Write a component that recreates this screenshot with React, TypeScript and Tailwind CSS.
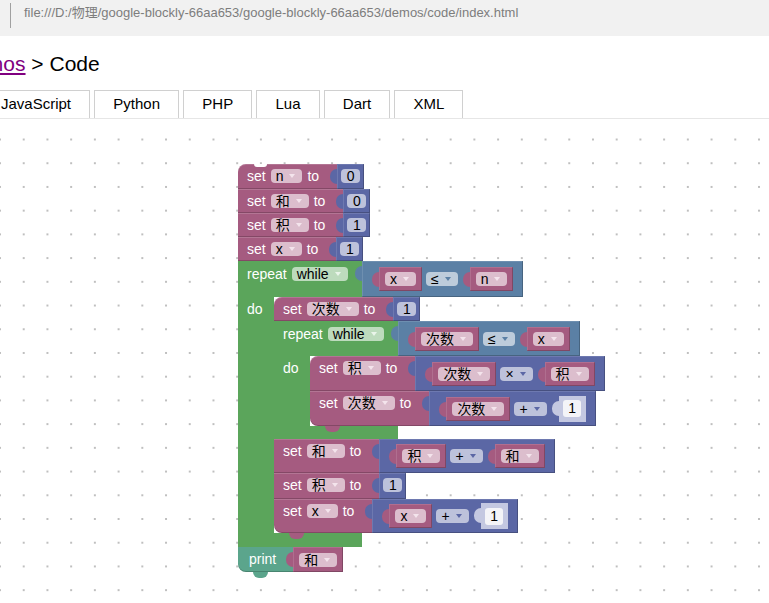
import type { ReactNode } from 'react';

const PINK = 'bg-[#a55b80]';
const EDGE = 'shadow-[inset_-1px_-1px_0_rgba(0,0,0,0.22),inset_1px_1px_0_rgba(255,255,255,0.12)]';

function Label({ children }: { children: ReactNode }) {
  return <span className="text-[14px] leading-none text-white">{children}</span>;
}

function Arrow({ tone }: { tone: string }) {
  return (
    <span
      className={`ml-[6px] inline-block h-0 w-0 border-x-[3px] border-t-[4px] border-x-transparent ${tone}`}
    />
  );
}

function Field({ text, bg, arrow }: { text: string; bg: string; arrow: string }) {
  return (
    <div
      className={`flex h-[14px] shrink-0 items-center rounded-[4px] pl-[5px] pr-[7px] text-[14px] leading-none text-black ${bg}`}
    >
      <span>{text}</span>
      <Arrow tone={arrow} />
    </div>
  );
}

// puzzle tab of an output block, drawn over the parent's colour
function Tab({ bg }: { bg: string }) {
  return (
    <div className="flex w-[8px] shrink-0 items-start justify-end pt-[5px]">
      <div className={`h-[15px] w-[7px] rounded-l-[7px] ${bg}`} />
    </div>
  );
}

function Bump({ bg }: { bg: string }) {
  return <div className={`absolute left-[15px] top-full z-10 h-[6px] w-[15px] rounded-b-[6px] ${bg}`} />;
}

function Num({ v }: { v: string }) {
  return (
    <div className="flex">
      <Tab bg="bg-[#5b67a5]" />
      <div className={`bg-[#5b67a5] px-[4px] pt-[5px] ${EDGE}`}>
        <div className="h-[14px] w-[19px] rounded-[4px] bg-[#bdc2db] text-center text-[14px] leading-[14px] text-black">
          {v}
        </div>
      </div>
    </div>
  );
}

function ShadowNum({ v }: { v: string }) {
  return (
    <div className="flex">
      <Tab bg="bg-[#c4c8e1]" />
      <div className="flex h-[26px] w-[27px] items-center justify-center bg-[#c4c8e1]">
        <div className="h-[17px] w-[18px] rounded-[3px] bg-[#f4f4f8] text-center text-[14px] leading-[17px] text-black">
          {v}
        </div>
      </div>
    </div>
  );
}

function Var({ name, h = 'h-[24px]' }: { name: string; h?: string }) {
  return (
    <div className="flex">
      <Tab bg={PINK} />
      <div className={`flex items-center px-[6px] ${PINK} ${EDGE} ${h}`}>
        <Field text={name} bg="bg-[#dcbecd]" arrow="border-t-[#f4e4ec]" />
      </div>
    </div>
  );
}

function Expr({
  kind,
  left,
  op,
  right,
}: {
  kind: 'cmp' | 'math';
  left: ReactNode;
  op: string;
  right: ReactNode;
}) {
  const bg = kind === 'cmp' ? 'bg-[#5b80a5]' : 'bg-[#5b67a5]';
  const fieldBg = kind === 'cmp' ? 'bg-[#bdccdb]' : 'bg-[#bdc2db]';
  const arrow = kind === 'cmp' ? 'border-t-[#5b80a5]' : 'border-t-[#5b67a5]';
  return (
    <div className="flex">
      <Tab bg={bg} />
      <div className={`flex items-center gap-[4px] pl-[9px] pr-[10px] ${bg} ${EDGE}`}>
        {left}
        <Field text={op} bg={fieldBg} arrow={arrow} />
        {right}
      </div>
    </div>
  );
}

function SetRow({
  name,
  value,
  h,
  first,
  last,
}: {
  name: string;
  value: ReactNode;
  h: string;
  first?: boolean;
  last?: boolean;
}) {
  return (
    <div
      className={`relative flex ${PINK} ${h} ${first ? 'rounded-tl-[8px]' : ''} ${
        last ? 'rounded-bl-[8px]' : ''
      } shadow-[inset_0_1px_0_rgba(255,255,255,0.16),inset_0_-1px_0_rgba(0,0,0,0.2)]`}
    >
      <div className="mt-[5px] flex h-[14px] items-center gap-[5px] pl-[9px] pr-[10px]">
        <Label>set</Label>
        <Field text={name} bg="bg-[#dcbecd]" arrow="border-t-[#f4e4ec]" />
        <Label>to</Label>
      </div>
      {value}
      {last && <Bump bg={PINK} />}
    </div>
  );
}

function Repeat({
  cond,
  head,
  foot,
  children,
}: {
  cond: ReactNode;
  head: string;
  foot: string;
  children: ReactNode;
}) {
  return (
    <div className="flex flex-col items-start">
      <div className={`flex bg-[#5ba55b] ${head}`}>
        <div className="mt-[6px] flex h-[14px] w-[116px] items-center gap-[5px] pl-[9px]">
          <Label>repeat</Label>
          <Field text="while" bg="bg-[#bddbbd]" arrow="border-t-[#eaf5ea]" />
        </div>
        {cond}
      </div>
      <div className="flex">
        <div className="w-[36px] bg-[#5ba55b] pl-[9px] pt-[5px]">
          <div className="flex h-[14px] items-center">
            <Label>do</Label>
          </div>
        </div>
        <div className="flex flex-col items-start">{children}</div>
      </div>
      <div className={`w-[124px] bg-[#5ba55b] ${foot}`} />
    </div>
  );
}

const tabs = ['JavaScript', 'Python', 'PHP', 'Lua', 'Dart', 'XML'];

export default function App() {
  return (
    <div className="flex h-screen w-screen flex-col overflow-hidden bg-white font-['Liberation_Sans','Noto_Sans_CJK_SC',Arial,sans-serif]">
      {/* address bar */}
      <div className="flex h-[36px] shrink-0 items-start bg-[#f1f1f1]">
        <div className="ml-[10px] mt-[3px] h-[25px] w-px bg-[#a0a0a0]" />
        <div className="ml-[13px] mt-[5px] whitespace-nowrap text-[13px] leading-[15px] text-[#7d7d7d]">
          file:///D:/物理/google-blockly-66aa653/google-blockly-66aa653/demos/code/index.html
        </div>
      </div>

      <div className="ml-[-41px] mt-[16px] h-[24px] whitespace-nowrap text-[21px] leading-[24px] text-black">
        <a className="text-[#800080] underline">Demos</a> &gt; Code
      </div>

      <div className="ml-[-18px] mt-[14px] flex shrink-0 gap-[4.3px] border-b border-[#e6e6e6]">
        {tabs.map((t) => (
          <div
            key={t}
            className="h-[28px] border border-b-0 border-[#d0d0d0] px-[18px] text-[15px] leading-[26px] text-black"
          >
            {t}
          </div>
        ))}
      </div>

      {/* workspace */}
      <div className="relative flex-1 bg-white bg-[radial-gradient(circle,#bfbfbf_1px,transparent_1.4px)] bg-[length:23.73px_23.73px] bg-[position:-11.86px_8.65px]">
        <div className="absolute left-[238px] top-[45px] flex flex-col items-start">
          <div className="relative">
            <SetRow name="n" h="h-[25px]" first value={<Num v="0" />} />
            <div className="absolute left-[16px] top-0 h-[3px] w-[13px] rounded-b-[4px] bg-white" />
          </div>
          <SetRow name="和" h="h-[24px]" value={<Num v="0" />} />
          <SetRow name="积" h="h-[24px]" value={<Num v="1" />} />
          <SetRow name="x" h="h-[24px]" value={<Num v="1" />} />
          <Repeat
            head="h-[36px]"
            foot="h-[14px]"
            cond={<Expr kind="cmp" left={<Var name="x" />} op="≤" right={<Var name="n" />} />}
          >
            <SetRow name="次数" h="h-[24px]" first value={<Num v="1" />} />
            <Repeat
              head="h-[35px]"
              foot="h-[13px]"
              cond={<Expr kind="cmp" left={<Var name="次数" />} op="≤" right={<Var name="x" />} />}
            >
              <SetRow
                name="积"
                h="h-[35px]"
                first
                value={<Expr kind="math" left={<Var name="次数" />} op="×" right={<Var name="积" />} />}
              />
              <SetRow
                name="次数"
                h="h-[35px]"
                last
                value={<Expr kind="math" left={<Var name="次数" />} op="+" right={<ShadowNum v="1" />} />}
              />
            </Repeat>
            <SetRow
              name="和"
              h="h-[34px]"
              value={<Expr kind="math" left={<Var name="积" />} op="+" right={<Var name="和" />} />}
            />
            <SetRow name="积" h="h-[26px]" value={<Num v="1" />} />
            <SetRow
              name="x"
              h="h-[34px]"
              last
              value={<Expr kind="math" left={<Var name="x" />} op="+" right={<ShadowNum v="1" />} />}
            />
          </Repeat>
          <div className="relative flex h-[25px] rounded-bl-[8px] bg-[#5ba58c] shadow-[inset_0_-1px_0_rgba(0,0,0,0.2)]">
            <div className="mt-[5px] flex h-[14px] items-center pl-[11px] pr-[9px]">
              <Label>print</Label>
            </div>
            <Var name="和" h="" />
            <Bump bg="bg-[#5ba58c]" />
          </div>
        </div>
      </div>
    </div>
  );
}
